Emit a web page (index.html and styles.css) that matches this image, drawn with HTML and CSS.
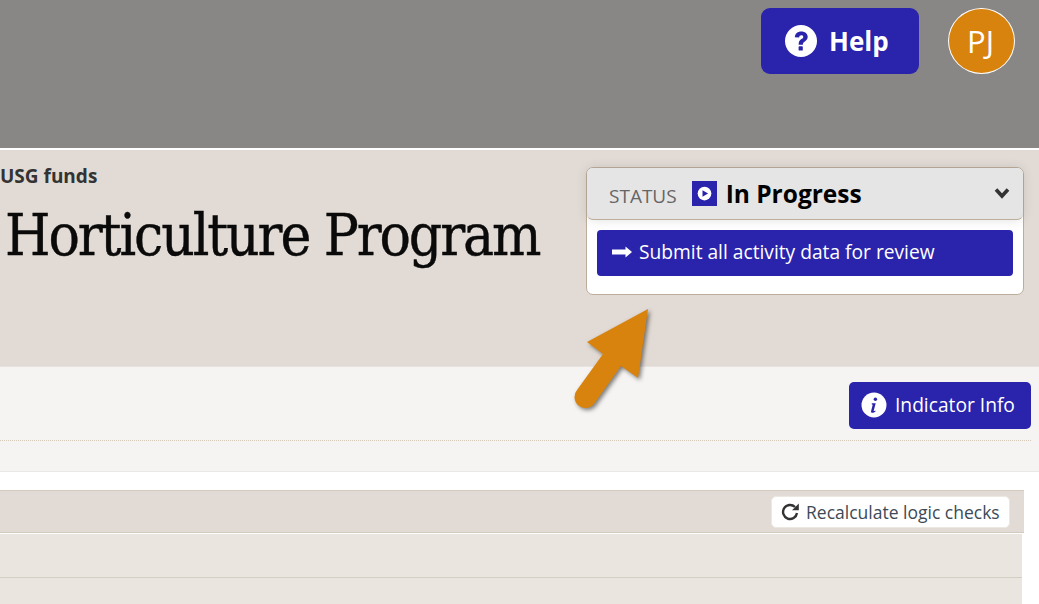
FILE: index.html
```html
<!DOCTYPE html>
<html lang="en">
<head>
    <meta charset="UTF-8">
    <meta name="viewport" content="width=device-width, initial-scale=1.0">
    <title>Horticulture Program</title>
    <link rel="stylesheet" href="styles.css">
</head>
<body>
    <header class="topbar">
        <a class="help-btn" href="#">
            <svg class="help-icon" viewBox="0 0 32 32" aria-hidden="true">
                <circle cx="16" cy="16" r="16" fill="#fff"/>
                <path d="M9.800 12.300c.3-3.700 2.900-5.800 6.500-5.800 3.700 0 6.400 2.200 6.400 5.300 0 2.300-1.200 3.500-2.900 4.600-1.400.9-1.900 1.500-1.900 2.700v.6h-4.200v-.9c0-2.300.9-3.500 2.700-4.700 1.300-.8 1.900-1.400 1.900-2.200 0-1-.8-1.600-1.900-1.600-1.300 0-2.100.8-2.300 2.300z" fill="#2a23ab"/>
                <rect x="13.600" y="21.300" width="4.200" height="4.200" rx=".6" fill="#2a23ab"/>
            </svg>
            Help
        </a>
        <div class="avatar">PJ</div>
    </header>

    <section class="page-head">
        <div class="page-title">
            <div class="funds">USG funds</div>
            <h1>Horticulture Program</h1>
        </div>
        <div class="status-card">
            <div class="status-head">
                <span class="status-label">STATUS</span>
                <span class="status-icon">
                    <svg viewBox="0 0 16 16" aria-hidden="true">
                        <circle cx="8" cy="8" r="4.400" fill="#fff"/>
                        <path d="M6.700 5.900 10.300 8l-3.600 2.100z" fill="#2a23ab"/>
                    </svg>
                </span>
                <span class="status-value">In Progress</span>
                <svg class="chevron" viewBox="0 0 16 13" aria-hidden="true">
                    <path d="M2 2.500l6 6.500 6-6.500" fill="none" stroke="#333" stroke-width="3.600"/>
                </svg>
            </div>
            <div class="status-body">
                <a class="submit-btn" href="#">
                    <svg class="arrow-small" viewBox="0 0 20 12" aria-hidden="true">
                        <path d="M0 3.500h13.500V.5L20 6l-6.500 5.500v-3H0z" fill="#fff"/>
                    </svg>
                    Submit all activity data for review
                </a>
            </div>
        </div>
    </section>

    <section class="indicators">
        <div class="indicators-top">
            <a class="info-btn" href="#">
                <svg class="info-icon" viewBox="0 0 26 26" aria-hidden="true">
                    <circle cx="13" cy="13" r="12.500" fill="#fff"/>
                    <circle cx="14.400" cy="7.300" r="1.700" fill="#2a23ab"/>
                    <path d="M10.800 11.200h3.900l-2 7.500c-.1.500.4.600 1.500-.2l.4.700c-1.300 1.200-2.500 1.800-3.500 1.600-.9-.2-1.200-1-1-1.900l1.500-5.700c.1-.6-.2-.9-.9-.9z" fill="#2a23ab"/>
                </svg>
                Indicator Info
            </a>
        </div>
    </section>

    <section class="checks">
        <div class="checks-head">
            <a class="recalc-btn" href="#">
                <svg class="recalc-icon" viewBox="0 0 20 20" aria-hidden="true">
                    <path d="M16 11a7 7 0 1 1-2-6" fill="none" stroke="#333" stroke-width="2.400"/>
                    <path d="M17.800 1.500v6.800H11z" fill="#333"/>
                </svg>
                Recalculate logic checks
            </a>
        </div>
        <div class="checks-row"></div>
        <div class="checks-row"></div>
    </section>

    <!-- callout arrow over the page -->
    <svg class="callout" viewBox="0 0 100 120" aria-hidden="true">
        <g transform="translate(-560 -295)">
            <path d="M648 309 587 342 603 354 577 390a11 11 0 0 0 17 14L621 366 638 378z" fill="#d9830f"/>
        </g>
    </svg>
</body>
</html>
```

FILE: styles.css
```css
body {
    font-family: 'Open Sans', sans-serif;
    margin: 0;
    padding: 0;
    height: 604px;
    overflow: hidden;
    background-color: #fff;
    position: relative;
}

a {
    text-decoration: none;
}

/* Top bar */
.topbar {
    height: 140px;
    padding: 8px 24px 0 0;
    display: flex;
    justify-content: flex-end;
    align-items: flex-start;
    gap: 29px;
    background-color: #888785;
    border-bottom: 2px solid #fff;
}

.help-btn {
    width: 158px;
    height: 66px;
    box-sizing: border-box;
    padding-left: 24px;
    display: flex;
    align-items: center;
    gap: 12px;
    color: #fff;
    font-size: 26px;
    font-weight: 700;
    background-color: #2a23ab;
    border-radius: 9px;
}

.help-icon {
    width: 32px;
    height: 32px;
}

.avatar {
    width: 67px;
    height: 66px;
    box-sizing: border-box;
    padding-right: 2px;
    display: flex;
    justify-content: center;
    align-items: center;
    color: #fff;
    font-size: 31px;
    background-color: #d9830f;
    border: 1px solid #fff;
    border-radius: 50%;
}

/* Title band */
.page-head {
    height: 217px;
    box-sizing: border-box;
    padding: 17px 15px 0 0;
    display: flex;
    justify-content: space-between;
    align-items: flex-start;
    background-color: #e2dbd5;
    border-bottom: 1px solid #e8e3de;
}

.funds {
    color: #333;
    font-size: 19px;
    font-weight: 700;
    line-height: 18px;
}

h1 {
    margin: 15px 0 0 5px;
    color: #0a0a0a;
    font-family: 'DejaVu Serif Condensed', 'DejaVu Serif', serif;
    font-size: 58px;
    font-weight: 400;
    line-height: 70px;
    letter-spacing: -2.1px;
    white-space: nowrap;
    -webkit-text-stroke: 0.4px #0a0a0a;
}

.status-card {
    width: 438px;
    height: 128px;
    box-sizing: border-box;
    background-color: #fff;
    border: 1px solid #bdae9b;
    border-radius: 7px;
}

.status-head {
    height: 52px;
    box-sizing: border-box;
    padding: 0 13px 0 22px;
    display: flex;
    align-items: center;
    background-color: #e5e5e5;
    border-bottom: 1px solid #bdae9b;
    border-radius: 6px;
    box-shadow: 0 0 12px rgba(0, 0, 0, 0.12);
}

.status-label {
    color: #666;
    font-size: 19px;
    margin-top: 4px;
}

.status-icon {
    width: 25px;
    height: 25px;
    margin-left: 15px;
    background-color: #2a23ab;
    display: flex;
}

.status-value {
    margin-left: 9px;
    color: #000;
    font-size: 24.5px;
    font-weight: 700;
}

.chevron {
    width: 16px;
    height: 13px;
    margin-left: auto;
}

.status-body {
    padding: 10px;
}

.submit-btn {
    height: 46px;
    padding: 0 0 3px 15px;
    box-sizing: border-box;
    display: flex;
    align-items: center;
    gap: 7px;
    color: #fff;
    font-size: 19.2px;
    background-color: #2a23ab;
    border-radius: 4px;
}

.arrow-small {
    width: 20px;
    height: 12px;
}

/* Indicators */
.indicators {
    height: 105px;
    box-sizing: border-box;
    padding: 15px 8px 0 0;
    background-color: #f5f4f2;
    border-bottom: 1px solid #e8e8e6;
}

.indicators-top {
    height: 58px;
    display: flex;
    justify-content: flex-end;
    align-items: flex-start;
    border-bottom: 1px dotted #d6c9b8;
}

.info-btn {
    width: 182px;
    height: 47px;
    box-sizing: border-box;
    padding: 0 0 2px 12px;
    display: flex;
    align-items: center;
    gap: 8px;
    color: #fff;
    font-size: 19.2px;
    background-color: #2a23ab;
    border-radius: 5px;
}

.info-icon {
    width: 26px;
    height: 26px;
}

/* Logic checks table */
.checks {
    width: 1024px;
    margin-top: 18px;
}

.checks-head {
    height: 43px;
    box-sizing: border-box;
    padding: 5px 14px 0 0;
    display: flex;
    justify-content: flex-end;
    align-items: flex-start;
    background-color: #e2dbd5;
    border-top: 1px solid #d3cabe;
    border-bottom: 1px solid #d3cabe;
}

.recalc-btn {
    width: 239px;
    height: 32px;
    box-sizing: border-box;
    padding-left: 9px;
    display: flex;
    align-items: center;
    gap: 5px;
    color: #3d4a55;
    font-size: 17.5px;
    background-color: #fff;
    border: 1px solid #ece7e1;
    border-radius: 5px;
}

.recalc-icon {
    width: 20px;
    height: 20px;
}

.checks-row {
    width: 1022px;
    height: 43px;
    margin-top: 1px;
    background-color: #eae5df;
    border-bottom: 1px solid #d3cec3;
}

.checks-row + .checks-row {
    margin-top: 0;
}

/* Callout arrow */
.callout {
    position: absolute;
    left: 560px;
    top: 295px;
    width: 100px;
    height: 120px;
    filter: drop-shadow(2px 2px 2px rgba(0, 0, 0, 0.5));
}
```
